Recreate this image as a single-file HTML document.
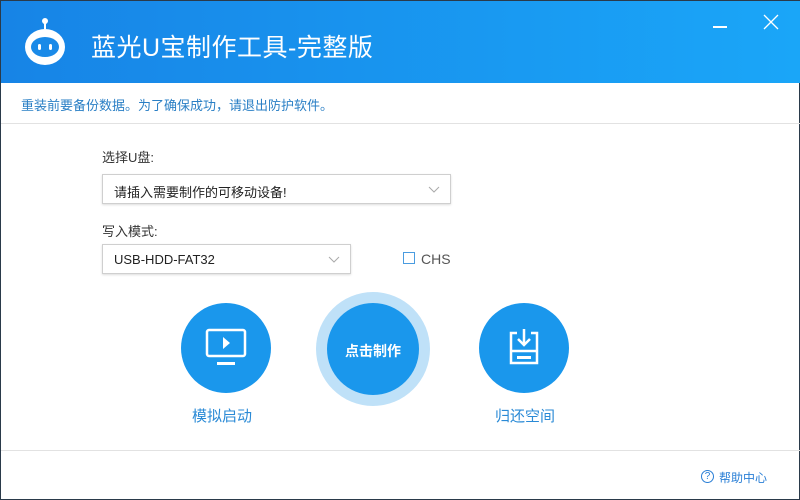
<!DOCTYPE html>
<html><head><meta charset="utf-8"><style>
*{margin:0;padding:0;box-sizing:border-box}
body{width:800px;height:500px;overflow:hidden;background:#fff;font-family:"Liberation Sans","Noto Sans CJK SC",sans-serif;position:relative;border:1px solid #2a3a4a}
.hd{position:absolute;left:0;top:0;width:800px;height:82px;background:linear-gradient(90deg,#1784e6,#1aa6f8)}
.t{position:absolute;left:90px;top:27px;color:#fff;font-size:25px;letter-spacing:0.5px}
.nt{position:absolute;left:20px;top:94px;color:#2a7fc5;font-size:13px}
.ln{position:absolute;left:0;width:800px;height:1px;background:#e2e2e2}
.lb{position:absolute;font-size:13px;color:#333}
.sel{position:absolute;height:30px;border:1px solid #cfcfcf;box-shadow:0 1px 2px #ddd;font-size:13px;color:#222;padding:7px 0 0 11px}
.sel svg{position:absolute;right:10px;top:11px}
.c{position:absolute;border-radius:50%;background:#1a97ec}
.cl{position:absolute;font-size:15px;color:#2a8ad6}
</style></head><body>
<div class="hd">
<svg style="position:absolute;left:22px;top:16px" width="44" height="50" viewBox="0 0 44 50">
<circle cx="22" cy="4" r="3" fill="#fff"/><rect x="21" y="6" width="2" height="6" fill="#fff"/>
<ellipse cx="22" cy="30" rx="20" ry="18" fill="#fff"/>
<ellipse cx="22" cy="30" rx="14" ry="10" fill="#1a8ae8"/>
<rect x="15" y="27" width="3" height="6" rx="1.5" fill="#fff"/><rect x="26" y="27" width="3" height="6" rx="1.5" fill="#fff"/>
</svg>
<div class="t">蓝光U宝制作工具-完整版</div>
<div style="position:absolute;left:712px;top:25px;width:14px;height:1.5px;background:#fff"></div>
<svg style="position:absolute;left:762px;top:13px" width="16" height="16"><path d="M1 1L15 15M15 1L1 15" stroke="#fff" stroke-width="1.3"/></svg>
</div>
<div class="nt">重装前要备份数据。为了确保成功，请退出防护软件。</div>
<div class="ln" style="top:122px"></div>
<div class="lb" style="left:101px;top:146px">选择U盘:</div>
<div class="sel" style="left:101px;top:173px;width:349px">请插入需要制作的可移动设备!<svg width="12" height="8"><path d="M1 1L6 6L11 1" stroke="#aaa" fill="none"/></svg></div>
<div class="lb" style="left:101px;top:220px">写入模式:</div>
<div class="sel" style="left:101px;top:243px;width:249px">USB-HDD-FAT32<svg width="12" height="8"><path d="M1 1L6 6L11 1" stroke="#aaa" fill="none"/></svg></div>
<div style="position:absolute;left:402px;top:251px;width:12px;height:12px;border:1px solid #4a9ce0"></div>
<div class="lb" style="left:420px;top:250px;font-size:14px;color:#555">CHS</div>
<div class="c" style="left:180px;top:302px;width:90px;height:90px">
<svg style="position:absolute;left:24px;top:25px" width="42" height="40" viewBox="0 0 42 40"><rect x="2" y="2" width="38" height="26" rx="2" fill="none" stroke="#fff" stroke-width="2.5"/><path d="M18 9L25 15L18 21Z" fill="#fff"/><rect x="12" y="34" width="18" height="3" fill="#fff"/></svg></div>
<div style="position:absolute;left:315px;top:291px;width:114px;height:114px;border-radius:50%;background:#bfe1f8"></div>
<div class="c" style="left:326px;top:302px;width:92px;height:92px"></div>
<div style="position:absolute;left:326px;top:340px;width:92px;text-align:center;color:#fff;font-size:14px;font-weight:bold">点击制作</div>
<div class="c" style="left:478px;top:302px;width:90px;height:90px">
<svg style="position:absolute;left:28px;top:24px" width="34" height="42" viewBox="0 0 34 42"><path d="M10 6H4V36H30V6H24" fill="none" stroke="#fff" stroke-width="2.5"/><path d="M4 24H30" stroke="#fff" stroke-width="2.5"/><path d="M17 2V18M11 12L17 18L23 12" fill="none" stroke="#fff" stroke-width="2.5"/><rect x="10" y="29" width="14" height="3" fill="#fff"/></svg></div>
<div class="cl" style="left:191px;top:404px">模拟启动</div>
<div class="cl" style="left:494px;top:404px">归还空间</div>
<div class="ln" style="top:449px"></div>
<div style="position:absolute;left:700px;top:469px;width:13px;height:13px;border:1px solid #2a7fd6;border-radius:50%;font-size:10px;color:#2a7fd6;text-align:center;line-height:11px">?</div>
<div style="position:absolute;left:718px;top:468px;font-size:12px;color:#2a7fd6">帮助中心</div>
</body></html>
